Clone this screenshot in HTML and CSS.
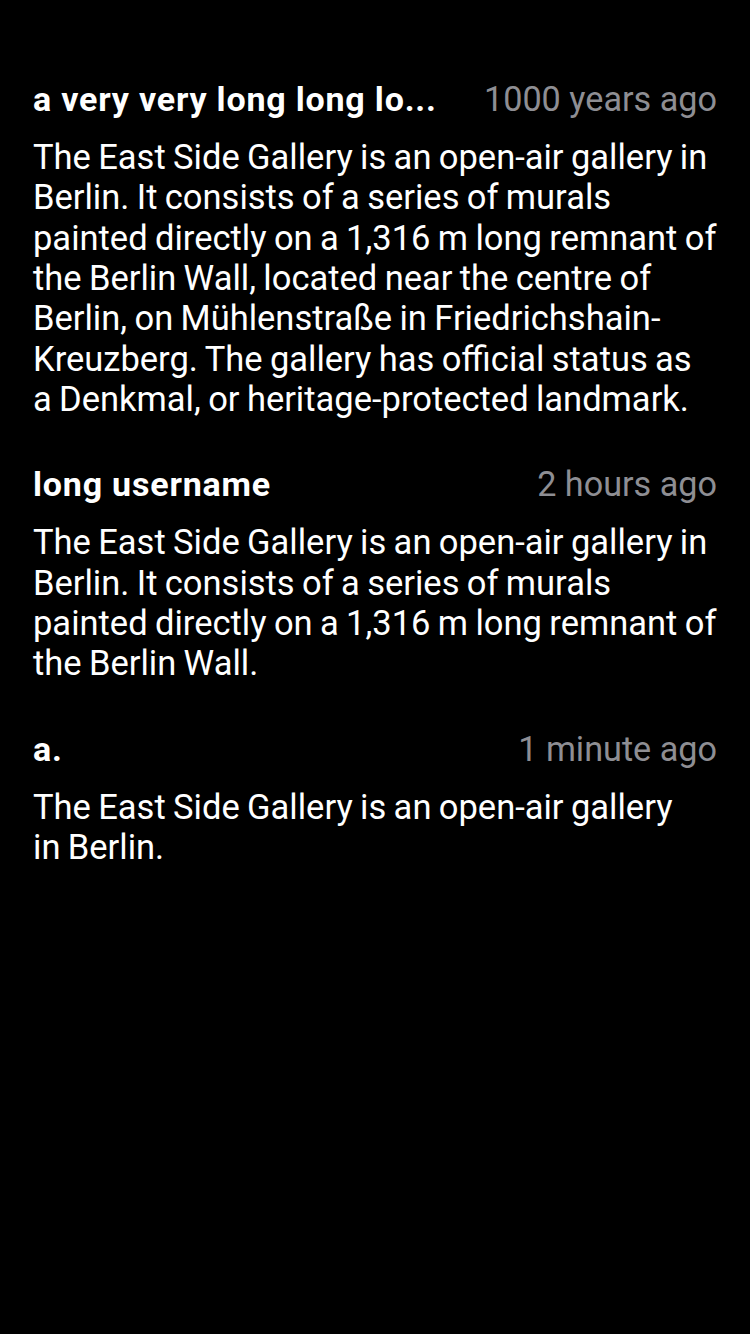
FILE: index.html
```html
<!DOCTYPE html>
<html lang="en">
<head>
<meta charset="utf-8">
<link rel="stylesheet" href="styles.css">
</head>
<body>
<div class="list">
  <div class="item">
    <div class="head">
      <span class="user">a very very long long lo...</span>
      <span class="time">1000 years ago</span>
    </div>
    <p class="text">The East Side Gallery is an open-air gallery in Berlin. It consists of a series of murals painted directly on a 1,316 m long remnant of the Berlin Wall, located near the centre of Berlin, on Mühlenstraße in Friedrichshain-Kreuzberg. The gallery has official status as a Denkmal, or heritage-protected landmark.</p>
  </div>
  <div class="item">
    <div class="head">
      <span class="user">long username</span>
      <span class="time">2 hours ago</span>
    </div>
    <p class="text">The East Side Gallery is an open-air gallery in Berlin. It consists of a series of murals painted directly on a 1,316 m long remnant of the Berlin Wall.</p>
  </div>
  <div class="item">
    <div class="head">
      <span class="user">a.</span>
      <span class="time">1 minute ago</span>
    </div>
    <p class="text">The East Side Gallery is an open-air gallery<br>in Berlin.</p>
  </div>
</div>
</body>
</html>
```
FILE: styles.css
```css
html, body {
  margin: 0;
  padding: 0;
  background: #000;
  height: 100%;
}
body {
  font-family: Roboto, "Noto Sans", sans-serif;
  color: #fff;
}
.list {
  padding: 79px 33px 0 33px;
  display: flex;
  flex-direction: column;
  gap: 45px;
}
.item {
  display: flex;
  flex-direction: column;
  gap: 18px;
}
.head {
  display: flex;
  justify-content: space-between;
  align-items: center;
  height: 40px;
  gap: 40px;
}
.user {
  font-size: 34px;
  font-weight: 700;
  letter-spacing: 0.8px;
  white-space: nowrap;
  overflow: hidden;
}
.time {
  font-size: 34.2px;
  color: #8e8e93;
  white-space: nowrap;
}
.text {
  margin: 0;
  font-size: 34.5px;
  line-height: 40.33px;
  word-spacing: -1.2px;
}
```
